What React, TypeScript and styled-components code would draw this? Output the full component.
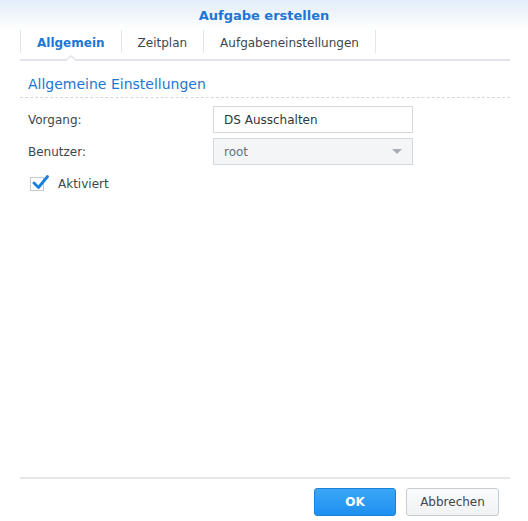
import styled, { createGlobalStyle } from "styled-components";

const GlobalStyle = createGlobalStyle`
  html, body {
    margin: 0;
    padding: 0;
    background: #ffffff;
  }
  body {
    font-family: "DejaVu Sans", Verdana, sans-serif;
    font-size: 12px;
    color: #3d4650;
  }
`;

const Window = styled.div`
  width: 528px;
  height: 521px;
  display: flex;
  flex-direction: column;
  background: #ffffff;
`;

const Header = styled.div`
  height: 30px;
  display: flex;
  align-items: center;
  justify-content: center;
  background: linear-gradient(to bottom, #e3edf9 0%, #f3f7fc 60%, #ffffff 100%);
`;

const Title = styled.div`
  font-size: 13px;
  font-weight: bold;
  color: #1d76d2;
`;

const Body = styled.div`
  flex: 1;
  display: flex;
  flex-direction: column;
  padding: 0 18px 5px 20px;
`;

const TabBar = styled.div`
  display: flex;
  height: 29px;
  border-bottom: 2px solid #e1e4e8;
`;

const Tab = styled.div<{ $active?: boolean }>`
  position: relative;
  height: 23px;
  line-height: 27px;
  padding: 0 16px 0 16px;
  border-right: 1px solid #e2e5e8;
  font-weight: ${(p) => (p.$active ? "bold" : "normal")};
  color: ${(p) => (p.$active ? "#1d76d2" : "#3d4650")};

  &:first-child {
    border-left: 1px solid #e2e5e8;
  }

  ${(p) =>
    p.$active &&
    `
    &::before {
      content: "";
      position: absolute;
      left: 50%;
      bottom: -8px;
      margin-left: -7px;
      border-left: 7px solid transparent;
      border-right: 7px solid transparent;
      border-bottom: 6px solid #e1e4e8;
    }
    &::after {
      content: "";
      position: absolute;
      left: 50%;
      bottom: -8px;
      margin-left: -5px;
      border-left: 5px solid transparent;
      border-right: 5px solid transparent;
      border-bottom: 4px solid #ffffff;
    }
  `}
`;

const SectionTitle = styled.div`
  margin-top: 15px;
  padding: 0 0 5px 8px;
  font-size: 14px;
  color: #1d76d2;
  border-bottom: 1px dashed #d3d8dd;
`;

const Form = styled.div`
  display: flex;
  flex-direction: column;
  gap: 5px;
  margin-top: 8px;
`;

const Row = styled.div`
  display: flex;
  align-items: center;
  padding-left: 8px;
`;

const Label = styled.div`
  width: 185px;
`;

const Field = styled.div<{ $disabled?: boolean }>`
  box-sizing: border-box;
  width: 200px;
  height: 27px;
  display: flex;
  align-items: center;
  justify-content: space-between;
  padding: 0 10px 0 10px;
  border: 1px solid #d4d9de;
  background: ${(p) => (p.$disabled ? "#f4f5f6" : "#ffffff")};
  color: ${(p) => (p.$disabled ? "#68717a" : "#2f3740")};
`;

const Caret = styled.span`
  width: 0;
  height: 0;
  border-left: 5px solid transparent;
  border-right: 5px solid transparent;
  border-top: 5px solid #a8aeb4;
`;

const CheckRow = styled.div`
  display: flex;
  align-items: center;
  gap: 14px;
  margin-top: 12px;
  padding-left: 10px;
`;

const CheckBox = styled.div`
  position: relative;
  box-sizing: border-box;
  width: 14px;
  height: 14px;
  border: 1px solid #c3cad1;
  background: #ffffff;

  svg {
    position: absolute;
    left: 1px;
    top: -4px;
  }
`;

const Spacer = styled.div`
  flex: 1;
`;

const Footer = styled.div`
  display: flex;
  justify-content: flex-end;
  gap: 10px;
  padding: 9px 11px 0 0;
  border-top: 2px solid #e4e6e9;
`;

const Button = styled.button<{ $primary?: boolean }>`
  box-sizing: border-box;
  height: 28px;
  border-radius: 3px;
  cursor: pointer;
  font-family: "DejaVu Sans", Verdana, sans-serif;
  font-size: 12px;
  ${(p) =>
    p.$primary
      ? `
    width: 82px;
    border: 1px solid #1b82dc;
    background: linear-gradient(to bottom, #3aa7f6, #1f8ff0);
    color: #ffffff;
    font-weight: bold;
  `
      : `
    width: 93px;
    border: 1px solid #c8cdd2;
    background: linear-gradient(to bottom, #fafbfc, #f0f2f4);
    color: #3d4650;
  `}
`;

export default function App() {
  return (
    <>
      <GlobalStyle />
      <Window>
        <Header>
          <Title>Aufgabe erstellen</Title>
        </Header>
        <Body>
          <TabBar>
            <Tab $active>Allgemein</Tab>
            <Tab>Zeitplan</Tab>
            <Tab>Aufgabeneinstellungen</Tab>
          </TabBar>

          <SectionTitle>Allgemeine Einstellungen</SectionTitle>

          <Form>
            <Row>
              <Label>Vorgang:</Label>
              <Field>DS Ausschalten</Field>
            </Row>
            <Row>
              <Label>Benutzer:</Label>
              <Field $disabled>
                root
                <Caret />
              </Field>
            </Row>
          </Form>

          <CheckRow>
            <CheckBox>
              <svg width="17" height="16" viewBox="0 0 17 16">
                <path
                  d="M2 9 L6.5 13.5 L15.5 2.5"
                  fill="none"
                  stroke="#1a7fdc"
                  strokeWidth="2.8"
                  strokeLinecap="round"
                  strokeLinejoin="round"
                />
              </svg>
            </CheckBox>
            <span>Aktiviert</span>
          </CheckRow>

          <Spacer />

          <Footer>
            <Button $primary>OK</Button>
            <Button>Abbrechen</Button>
          </Footer>
        </Body>
      </Window>
    </>
  );
}
